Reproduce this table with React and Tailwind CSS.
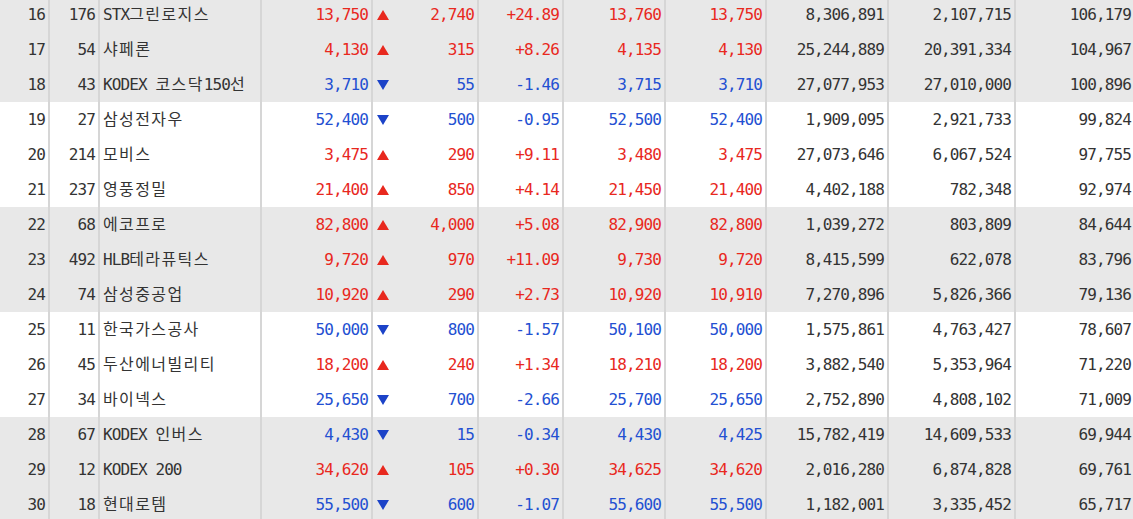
import React from 'react';

// 순위 테이블 (16~30위)
const rows = [
  ['16', '176', 'STX그린로지스', '13,750', 'up', '2,740', '+24.89', '13,760', '13,750', '8,306,891', '2,107,715', '106,179'],
  ['17', '54', '샤페론', '4,130', 'up', '315', '+8.26', '4,135', '4,130', '25,244,889', '20,391,334', '104,967'],
  ['18', '43', 'KODEX 코스닥150선', '3,710', 'down', '55', '-1.46', '3,715', '3,710', '27,077,953', '27,010,000', '100,896'],
  ['19', '27', '삼성전자우', '52,400', 'down', '500', '-0.95', '52,500', '52,400', '1,909,095', '2,921,733', '99,824'],
  ['20', '214', '모비스', '3,475', 'up', '290', '+9.11', '3,480', '3,475', '27,073,646', '6,067,524', '97,755'],
  ['21', '237', '영풍정밀', '21,400', 'up', '850', '+4.14', '21,450', '21,400', '4,402,188', '782,348', '92,974'],
  ['22', '68', '에코프로', '82,800', 'up', '4,000', '+5.08', '82,900', '82,800', '1,039,272', '803,809', '84,644'],
  ['23', '492', 'HLB테라퓨틱스', '9,720', 'up', '970', '+11.09', '9,730', '9,720', '8,415,599', '622,078', '83,796'],
  ['24', '74', '삼성중공업', '10,920', 'up', '290', '+2.73', '10,920', '10,910', '7,270,896', '5,826,366', '79,136'],
  ['25', '11', '한국가스공사', '50,000', 'down', '800', '-1.57', '50,100', '50,000', '1,575,861', '4,763,427', '78,607'],
  ['26', '45', '두산에너빌리티', '18,200', 'up', '240', '+1.34', '18,210', '18,200', '3,882,540', '5,353,964', '71,220'],
  ['27', '34', '바이넥스', '25,650', 'down', '700', '-2.66', '25,700', '25,650', '2,752,890', '4,808,102', '71,009'],
  ['28', '67', 'KODEX 인버스', '4,430', 'down', '15', '-0.34', '4,430', '4,425', '15,782,419', '14,609,533', '69,944'],
  ['29', '12', 'KODEX 200', '34,620', 'up', '105', '+0.30', '34,625', '34,620', '2,016,280', '6,874,828', '69,761'],
  ['30', '18', '현대로템', '55,500', 'down', '600', '-1.07', '55,600', '55,500', '1,182,001', '3,335,452', '65,717'],
];

const cell = 'flex items-center justify-end pr-[3px] border-r-2 border-[#d6d6d6] h-full';

const Name = ({ text }) => (
  <div className="flex items-center pl-[3px] border-r-2 border-[#d6d6d6] h-full whitespace-pre text-[#333]">
    {text.split(/([가-힣]+)/).map((part, i) =>
      i % 2 === 1 ? (
        <span key={i} className="tracking-[1.4px]">{part}</span>
      ) : (
        <span key={i}>{part}</span>
      )
    )}
  </div>
);

const Row = ({ data, shaded }) => {
  const [rank, prev, name, price, dir, change, rate, high, low, vol, vol2, amt] = data;
  const up = dir === 'up';
  const color = up ? 'text-[#e8281e]' : 'text-[#2350d2]';
  return (
    <div
      className={`grid grid-cols-[50px_50px_162px_111px_106px_85px_102px_101px_122px_127px_117px] h-[35px] ${
        shaded ? 'bg-[#e8e8e8]' : 'bg-white'
      }`}
    >
      <div className={`${cell} text-[#333]`}>{rank}</div>
      <div className={`${cell} text-[#333]`}>{prev}</div>
      <Name text={name} />
      <div className={`${cell} ${color}`}>{price}</div>
      <div className="flex items-center justify-between pl-[4px] pr-[3px] border-r-2 border-[#d6d6d6] h-full">
        <svg width="12" height="10" viewBox="0 0 12 10">
          {up ? (
            <polygon points="6,0 12,10 0,10" fill="#e8281e" />
          ) : (
            <polygon points="0,0 12,0 6,10" fill="#1c43c8" />
          )}
        </svg>
        <span className={color}>{change}</span>
      </div>
      <div className={`${cell} ${color}`}>{rate}</div>
      <div className={`${cell} ${color}`}>{high}</div>
      <div className={`${cell} ${color}`}>{low}</div>
      <div className={`${cell} text-[#333]`}>{vol}</div>
      <div className={`${cell} text-[#333]`}>{vol2}</div>
      <div className="flex items-center justify-end pr-[2px] h-full text-[#333]">{amt}</div>
    </div>
  );
};

const App = () => {
  return (
    <div className="w-[1133px] h-[519px] overflow-hidden bg-white">
      <div className="-mt-[3px] text-[16px] tracking-[-0.9px] leading-none [font-family:'DejaVu_Sans_Mono','Noto_Sans_CJK_KR',monospace]">
        {rows.map((r, i) => (
          <Row key={r[0]} data={r} shaded={Math.floor(i / 3) % 2 === 0} />
        ))}
      </div>
    </div>
  );
};

export default App;
